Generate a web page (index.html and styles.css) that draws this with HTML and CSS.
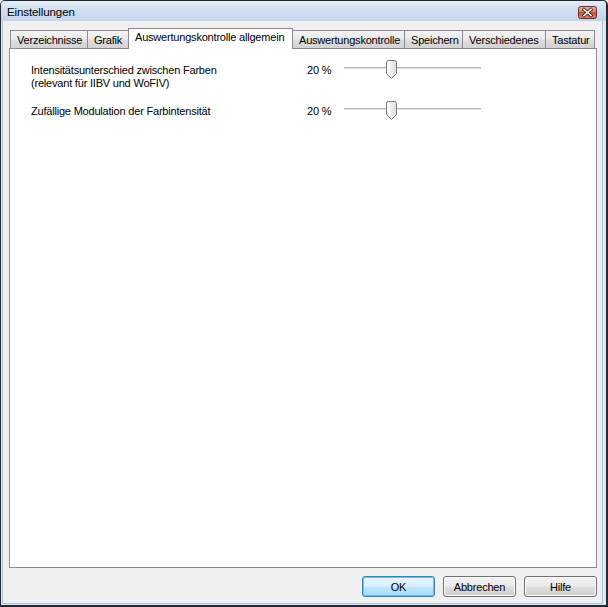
FILE: index.html
```html
<!DOCTYPE html>
<html lang="de">
<head>
<meta charset="utf-8">
<title>Einstellungen</title>
<link rel="stylesheet" href="styles.css">
</head>
<body>
<div class="window">
  <div class="titlebar">
    <span class="title">Einstellungen</span>
    <span class="close" aria-label="Schließen">
      <svg width="19" height="13" viewBox="0 0 19 13">
        <defs>
          <linearGradient id="cg" x1="0" y1="0" x2="0" y2="1">
            <stop offset="0" stop-color="#eab3a6"/>
            <stop offset="0.5" stop-color="#d47a66"/>
            <stop offset="0.5" stop-color="#c4533c"/>
            <stop offset="1" stop-color="#d9876f"/>
          </linearGradient>
        </defs>
        <rect x="0.5" y="0.5" width="18" height="12" rx="2" fill="url(#cg)" stroke="#6b2f25"/>
        <path d="M6 3.5 L13 9.5 M13 3.5 L6 9.5" stroke="#4a1d16" stroke-width="3.2" stroke-linecap="square"/>
        <path d="M6 3.5 L13 9.5 M13 3.5 L6 9.5" stroke="#ffffff" stroke-width="1.6" stroke-linecap="square"/>
      </svg>
    </span>
  </div>
  <div class="client">
    <div class="tabs">
      <div class="tab tab-verz">Verzeichnisse</div>
      <div class="tab tab-grafik">Grafik</div>
      <div class="tab tab-active">Auswertungskontrolle allgemein</div>
      <div class="tab tab-ausw">Auswertungskontrolle</div>
      <div class="tab tab-speich">Speichern</div>
      <div class="tab tab-versch">Verschiedenes</div>
      <div class="tab tab-tast">Tastatur</div>
    </div>
    <div class="panel">
      <div class="settings">
        <div class="label">Intensitätsunterschied zwischen Farben<br>(relevant für IIBV und WoFIV)</div>
        <div class="value">20 %</div>
        <div class="slider">
          <div class="track"></div>
          <svg class="thumb" width="11" height="19" viewBox="0 0 11 19">
            <defs>
              <linearGradient id="tg1" x1="0" y1="0" x2="1" y2="0">
                <stop offset="0" stop-color="#ffffff"/>
                <stop offset="1" stop-color="#dcdcdc"/>
              </linearGradient>
            </defs>
            <path d="M0.5 2.5 Q0.5 0.5 2.5 0.5 H8.5 Q10.5 0.5 10.5 2.5 V13.5 L5.5 18.5 L0.5 13.5 Z" fill="url(#tg1)" stroke="#777"/>
          </svg>
        </div>
        <div class="label">Zufällige Modulation der Farbintensität</div>
        <div class="value">20 %</div>
        <div class="slider">
          <div class="track"></div>
          <svg class="thumb" width="11" height="19" viewBox="0 0 11 19">
            <path d="M0.5 2.5 Q0.5 0.5 2.5 0.5 H8.5 Q10.5 0.5 10.5 2.5 V13.5 L5.5 18.5 L0.5 13.5 Z" fill="url(#tg1)" stroke="#777"/>
          </svg>
        </div>
      </div>
    </div>
    <div class="buttons">
      <button class="btn btn-default">OK</button>
      <button class="btn">Abbrechen</button>
      <button class="btn">Hilfe</button>
    </div>
  </div>
</div>
</body>
</html>
```

FILE: styles.css
```css
html, body {
  margin: 0;
  padding: 0;
  width: 608px;
  height: 607px;
  overflow: hidden;
  background: #ffffff;
}

body {
  font-family: "Liberation Sans", Arial, sans-serif;
  font-size: 11px;
  letter-spacing: -0.2px;
  color: #000;
}

.window {
  box-sizing: border-box;
  width: 608px;
  height: 607px;
  border: 1px solid #262a30;
  border-right-width: 2px;
  border-bottom-width: 2px;
  border-radius: 5px 5px 0 0;
  background: #dfe8f3;
  padding: 0 3px 1px 1px;
  display: flex;
  flex-direction: column;
}

.titlebar {
  height: 20px;
  flex: none;
  display: flex;
  align-items: center;
  justify-content: space-between;
  padding: 0 8px 0 6px;
  background: linear-gradient(#e4edf8, #d0def0 45%, #c3d4ea);
  margin: 0 -3px 0 -1px;
  border-radius: 4px 4px 0 0;
}

.title {
  font-size: 11.5px;
  letter-spacing: -0.1px;
  color: #000;
  padding-top: 1px;
}

.close {
  display: block;
  width: 19px;
  height: 13px;
  margin-top: 3px;
  margin-right: 1px;
}

.close svg {
  display: block;
}

.client {
  flex: 1;
  display: flex;
  flex-direction: column;
  background: #f0f0f0;
  border: 1px solid #a9c3e3;
  border-top: none;
  padding: 7px 5px 6px 6px;
  min-height: 0;
}

.tabs {
  display: flex;
  align-items: flex-end;
  height: 21px;
  padding-left: 1px;
  margin-bottom: -1px;
  position: relative;
  z-index: 1;
}

.tab {
  box-sizing: border-box;
  height: 18px;
  margin-bottom: 1px;
  margin-left: -1px;
  border: 1px solid #898c95;
  border-bottom: none;
  background: linear-gradient(#f3f3f3, #ebebeb 45%, #dedede 55%, #d2d2d2);
  padding: 3px 0 0 6px;
  line-height: 13px;
  white-space: nowrap;
  overflow: hidden;
}

.tab:first-child {
  margin-left: 0;
}

.tab-active {
  height: 21px;
  margin-bottom: 0;
  background: #ffffff;
  padding-top: 2px;
}

.tab-verz { width: 78px; }
.tab-grafik { width: 42px; }
.tab-active { width: 165px; }
.tab-ausw { width: 113px; }
.tab-speich { width: 59px; }
.tab-versch { width: 84px; }
.tab-tast { width: 50px; }

.panel {
  flex: 1;
  background: #ffffff;
  border: 1px solid #898c95;
  min-height: 0;
}

.settings {
  display: grid;
  grid-template-columns: 276px 37px 137px;
  row-gap: 15px;
  padding: 15px 0 0 21px;
  line-height: 13px;
}

.slider {
  position: relative;
  height: 13px;
}

.track {
  margin-top: 3px;
  height: 1px;
  background: #b4b4b4;
  border-bottom: 1px solid #e4e4e4;
}

.thumb {
  position: absolute;
  left: 42px;
  top: -4px;
}

.buttons {
  display: flex;
  justify-content: flex-end;
  gap: 8px;
  padding-top: 8px;
}

.btn {
  box-sizing: border-box;
  width: 73px;
  height: 21px;
  margin: 0;
  padding: 0;
  font-family: "Liberation Sans", Arial, sans-serif;
  font-size: 11px;
  letter-spacing: -0.2px;
  color: #000;
  border: 1px solid #707070;
  border-radius: 3px;
  background: linear-gradient(#f2f2f2, #ebebeb 45%, #dddddd 55%, #cfcfcf);
  box-shadow: inset 0 0 0 1px #fbfbfb;
}

.btn-default {
  border-color: #3c7fb1;
  background: linear-gradient(#eaf6fd, #d9f0fc 45%, #bee6fd 55%, #a7d9f5);
  box-shadow: inset 0 0 0 1px #5ec8f2;
}
```
